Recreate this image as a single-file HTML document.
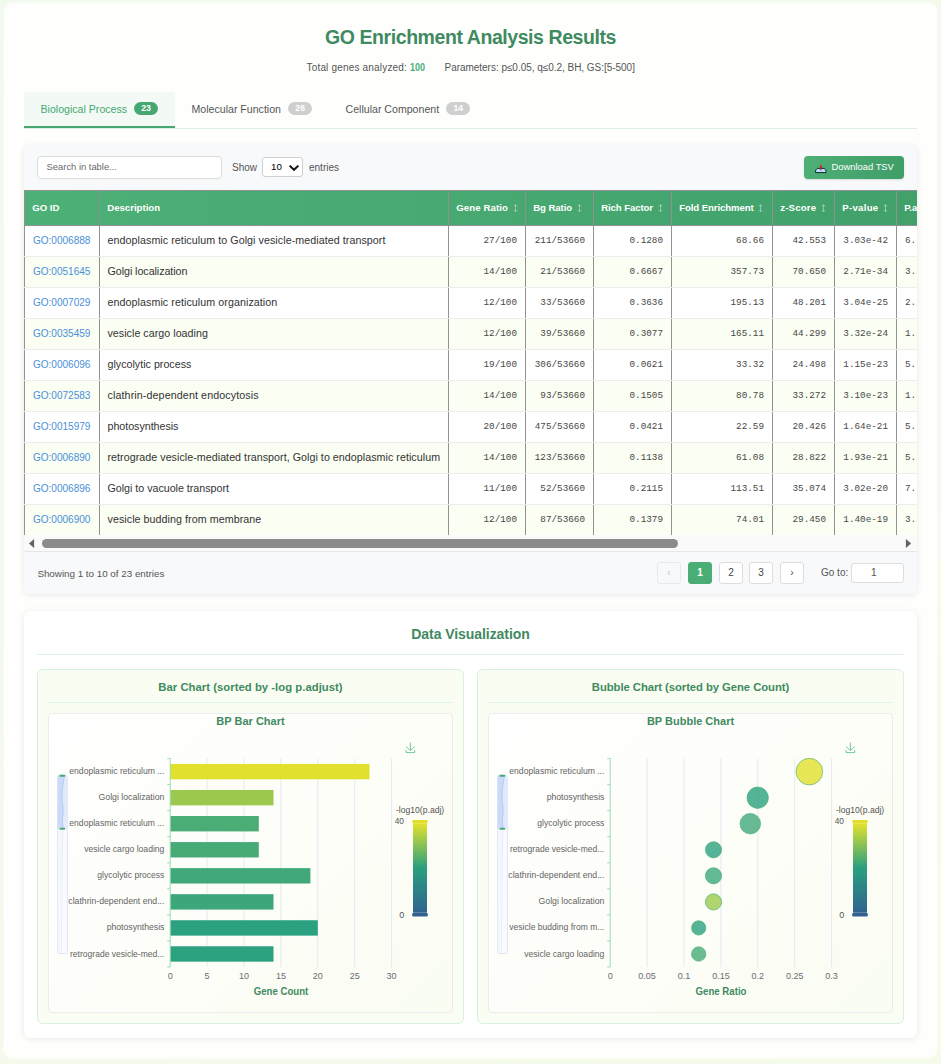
<!DOCTYPE html>
<html>
<head>
<meta charset="utf-8">
<title>GO Enrichment Analysis Results</title>
<style>
*{box-sizing:border-box;margin:0;padding:0}
html,body{width:941px;height:1064px;overflow:hidden}
body{font-family:"Liberation Sans",sans-serif;background:linear-gradient(135deg,#f2faef 0%,#f5fbea 100%);position:relative;color:#333}
.abs{position:absolute}
#wrap{left:4px;top:3px;width:933px;height:1055px;background:#fefffd;border-radius:9px;box-shadow:0 0 3px rgba(255,255,255,.8)}
#title{left:0;top:22px;width:941px;text-align:center;font-size:19.5px;letter-spacing:-.43px;font-weight:bold;color:#3f8a61;line-height:30px;white-space:nowrap}
#sub{left:0;top:59.8px;width:941px;height:16px;font-size:10px;color:#555;white-space:nowrap}
#sub span{position:absolute;top:0;line-height:16px}
#sub b{color:#4aae78}
/* tabs */
#tabline{left:24px;top:128px;width:893px;height:1px;background:#dcf1e6}
.tab{top:92px;height:36px;font-size:10.6px;line-height:34px;color:#555;white-space:nowrap}
.tab .bd{position:absolute;top:9.6px;height:13.6px;width:24px;border-radius:6.8px;background:#cfcfcf;color:#fff;font-size:8.7px;font-weight:bold;text-align:center;line-height:13.8px}
#tab1{left:24px;width:151px;background:#f3faf5;color:#45a870}
#tab1:after{content:"";position:absolute;left:0;top:34px;width:151px;height:2.4px;background:#45a870}
#tab1 .bd{background:#45a870}
/* table card */
#card1{left:24px;top:145px;width:893px;height:449px;background:#f8f9fa;border-radius:6px;box-shadow:0 1px 6px rgba(0,0,0,.09);overflow:hidden}
#search{left:13.4px;top:11.3px;width:184.2px;height:23px;border:1px solid #dcdcdc;border-radius:4px;background:#fff;font-size:9.4px;color:#6a6a6a;line-height:20.4px;padding-left:8.2px}
.tl{font-size:10px;color:#555;line-height:14px;white-space:nowrap}
#sel{left:238.4px;top:12.3px;width:40.2px;height:20px;border:1px solid #cfcfcf;border-radius:3px;background:#fff;font-size:9.8px;color:#000;line-height:18.4px;padding-left:7.6px}
#dl{left:780px;top:11px;width:100px;height:22.7px;border-radius:4px;background:linear-gradient(100deg,#4eb077,#3f9d67);color:#fff;font-size:9.4px;line-height:22.4px;white-space:nowrap;box-shadow:0 1px 2px rgba(0,0,0,.12)}
#tblwrap{left:0;top:45px;width:893px;height:345px;overflow:hidden;background:#fff}
table{border-collapse:collapse;table-layout:fixed;width:1000px;font-size:10.4px}
th{height:35px;padding-bottom:1.6px;color:#fff;font-weight:bold;font-size:9.6px;text-align:left;padding:0 0 1.6px 7.2px;border:1px solid #919191;white-space:nowrap;letter-spacing:.01px}
th .s{display:inline-block;vertical-align:-2.3px;margin-left:4.6px;width:5px;height:8.4px;opacity:.5}
tr.hd{background:linear-gradient(90deg,#4db077 0,#42a16b 893px)}
td{height:31px;padding:0 8px 1.4px 8px;border-left:1px solid #939393;border-right:1px solid #939393;border-bottom:1px solid #ececec;white-space:nowrap;overflow:hidden;color:#333}
tr:nth-child(odd) td{background:#fafef3}

td.id{color:#4a90d9;font-size:10.05px;padding-left:7.9px}
td.d{font-size:10.7px;padding-left:7.5px}
#sb{left:0;top:390px;width:893px;height:16px;background:#fafafa}
#foot{left:0;top:406px;width:893px;height:43px;background:#f8f9fa;border-top:1px solid #e6e7e9}
.pg{position:absolute;top:10px;width:24px;height:22px;border:1px solid #ddd;border-radius:3px;background:#fff;font-size:10px;color:#444;text-align:center;line-height:20px}
.pg.act{background:#49ad75;border-color:#49ad75;color:#fff;font-weight:bold}
.pg.dis{color:#c4c4c4;background:#f8f9fa;border-color:#e9e9e9}
#goto{left:827px;top:11px;width:53px;height:20px;border:1px solid #ddd;border-radius:3px;background:#fff;font-size:10px;color:#555;line-height:18px;padding-left:19px}
#card2{left:24px;top:610.6px;width:893px;height:427.2px;background:#fff;border-radius:7px;box-shadow:0 1px 7px rgba(0,0,0,.09)}
.h2{text-align:center;font-size:14px;letter-spacing:-.06px;font-weight:bold;color:#3f8a61;line-height:20px}
.panel{width:427px;height:355px;background:#fafef2;border:1px solid #d6f0e1;border-radius:6px}
.h3{left:0;top:9px;width:425px;text-align:center;font-size:11.3px;font-weight:bold;color:#3f8a61;line-height:16px}
.pl{left:10px;top:32px;width:405px;height:1px;background:#ddf2e8}
.cbox{left:10px;top:43px;width:405px;height:300px;border:1px solid #ebecee;border-radius:4px;background:linear-gradient(135deg,#fff 0%,#fdfef9 45%,#fafdf2 100%)}
td.n{font-family:"Liberation Mono",monospace;font-size:9.3px;text-align:right;color:#484848}
td.n.l{text-align:left;padding-right:0}
</style>
</head>
<body>
<div id="wrap" class="abs"></div>
<div id="title" class="abs">GO Enrichment Analysis Results</div>
<div id="sub" class="abs"><span style="left:306.5px;letter-spacing:.18px">Total genes analyzed:</span><span style="left:409.5px;transform:scaleX(.904);transform-origin:0 0"><b>100</b></span><span style="left:444.5px;letter-spacing:-.03px">Parameters: p≤0.05, q≤0.2, BH, GS:[5-500]</span></div>

<div id="tabline" class="abs"></div>
<div id="tab1" class="abs tab"><span class="abs" style="left:16.5px">Biological Process</span><span class="bd" style="left:110px">23</span></div>
<div class="abs tab" style="left:175px;width:152px"><span class="abs" style="left:16.5px">Molecular Function</span><span class="bd" style="left:113.2px">26</span></div>
<div class="abs tab" style="left:329px;width:158px"><span class="abs" style="left:16.5px">Cellular Component</span><span class="bd" style="left:117.3px">14</span></div>

<div id="card1" class="abs">
  <div id="search" class="abs">Search in table...</div>
  <div class="abs tl" style="left:208px;top:15.5px">Show</div>
  <div id="sel" class="abs">10<svg class="abs" style="left:24.8px;top:6.1px" width="12" height="8" viewBox="0 0 12 8"><path d="M1.6 1.6L6 5.8L10.4 1.6" stroke="#111" stroke-width="2" fill="none"/></svg></div>
  <div class="abs tl" style="left:285px;top:15.5px">entries</div>
  <div id="dl" class="abs"><svg class="abs" style="left:10px;top:7px" width="14" height="12" viewBox="0 0 14 12"><path d="M1.6 9.6V7.2L3.4 5.4H10.2L12 7.2V9.6Z" fill="#bcdffa" stroke="#16262a" stroke-width="1" stroke-linejoin="round"/><rect x="6" y="1.9" width="1.6" height="4.6" rx=".6" fill="#e2121c"/><path d="M5.5 6.4H8.1L6.8 7.9Z" fill="#3588e0"/></svg><span class="abs" style="left:27.5px">Download TSV</span></div>
  <div id="tblwrap" class="abs">
  <table>
  <colgroup><col style="width:75px"><col style="width:349px"><col style="width:77px"><col style="width:68px"><col style="width:78px"><col style="width:101px"><col style="width:62px"><col style="width:62px"><col style="width:128px"></colgroup>
  <tr class="hd"><th>GO ID</th><th>Description</th><th style="letter-spacing:0.11px">Gene Ratio<svg class="s" viewBox="0 0 5 9"><path d="M2.5 0.6V8.4M0.7 2.4L2.5 0.6L4.3 2.4M0.7 6.6L2.5 8.4L4.3 6.6" stroke="#fff" stroke-width="0.9" fill="none"/></svg></th><th style="letter-spacing:-0.07px">Bg Ratio<svg class="s" viewBox="0 0 5 9"><path d="M2.5 0.6V8.4M0.7 2.4L2.5 0.6L4.3 2.4M0.7 6.6L2.5 8.4L4.3 6.6" stroke="#fff" stroke-width="0.9" fill="none"/></svg></th><th style="letter-spacing:-0.09px">Rich Factor<svg class="s" viewBox="0 0 5 9"><path d="M2.5 0.6V8.4M0.7 2.4L2.5 0.6L4.3 2.4M0.7 6.6L2.5 8.4L4.3 6.6" stroke="#fff" stroke-width="0.9" fill="none"/></svg></th><th style="letter-spacing:-0.08px">Fold Enrichment<svg class="s" viewBox="0 0 5 9"><path d="M2.5 0.6V8.4M0.7 2.4L2.5 0.6L4.3 2.4M0.7 6.6L2.5 8.4L4.3 6.6" stroke="#fff" stroke-width="0.9" fill="none"/></svg></th><th style="letter-spacing:0.21px">z-Score<svg class="s" viewBox="0 0 5 9"><path d="M2.5 0.6V8.4M0.7 2.4L2.5 0.6L4.3 2.4M0.7 6.6L2.5 8.4L4.3 6.6" stroke="#fff" stroke-width="0.9" fill="none"/></svg></th><th style="letter-spacing:0.31px">P-value<svg class="s" viewBox="0 0 5 9"><path d="M2.5 0.6V8.4M0.7 2.4L2.5 0.6L4.3 2.4M0.7 6.6L2.5 8.4L4.3 6.6" stroke="#fff" stroke-width="0.9" fill="none"/></svg></th><th>P.adjust</th></tr>
  <tr><td class="id">GO:0006888</td><td class="d" style="letter-spacing:0.063px">endoplasmic reticulum to Golgi vesicle-mediated transport</td><td class="n">27/100</td><td class="n">211/53660</td><td class="n">0.1280</td><td class="n">68.66</td><td class="n">42.553</td><td class="n">3.03e-42</td><td class="n l">6.</td></tr>
  <tr><td class="id">GO:0051645</td><td class="d" style="letter-spacing:-0.050px">Golgi localization</td><td class="n">14/100</td><td class="n">21/53660</td><td class="n">0.6667</td><td class="n">357.73</td><td class="n">70.650</td><td class="n">2.71e-34</td><td class="n l">3.</td></tr>
  <tr><td class="id">GO:0007029</td><td class="d" style="letter-spacing:0.068px">endoplasmic reticulum organization</td><td class="n">12/100</td><td class="n">33/53660</td><td class="n">0.3636</td><td class="n">195.13</td><td class="n">48.201</td><td class="n">3.04e-25</td><td class="n l">2.</td></tr>
  <tr><td class="id">GO:0035459</td><td class="d" style="letter-spacing:0.029px">vesicle cargo loading</td><td class="n">12/100</td><td class="n">39/53660</td><td class="n">0.3077</td><td class="n">165.11</td><td class="n">44.299</td><td class="n">3.32e-24</td><td class="n l">1.</td></tr>
  <tr><td class="id">GO:0006096</td><td class="d" style="letter-spacing:0.006px">glycolytic process</td><td class="n">19/100</td><td class="n">306/53660</td><td class="n">0.0621</td><td class="n">33.32</td><td class="n">24.498</td><td class="n">1.15e-23</td><td class="n l">5.</td></tr>
  <tr><td class="id">GO:0072583</td><td class="d" style="letter-spacing:0.110px">clathrin-dependent endocytosis</td><td class="n">14/100</td><td class="n">93/53660</td><td class="n">0.1505</td><td class="n">80.78</td><td class="n">33.272</td><td class="n">3.10e-23</td><td class="n l">1.</td></tr>
  <tr><td class="id">GO:0015979</td><td class="d" style="letter-spacing:-0.029px">photosynthesis</td><td class="n">20/100</td><td class="n">475/53660</td><td class="n">0.0421</td><td class="n">22.59</td><td class="n">20.426</td><td class="n">1.64e-21</td><td class="n l">5.</td></tr>
  <tr><td class="id">GO:0006890</td><td class="d" style="letter-spacing:0.042px">retrograde vesicle-mediated transport, Golgi to endoplasmic reticulum</td><td class="n">14/100</td><td class="n">123/53660</td><td class="n">0.1138</td><td class="n">61.08</td><td class="n">28.822</td><td class="n">1.93e-21</td><td class="n l">5.</td></tr>
  <tr><td class="id">GO:0006896</td><td class="d" style="letter-spacing:-0.015px">Golgi to vacuole transport</td><td class="n">11/100</td><td class="n">52/53660</td><td class="n">0.2115</td><td class="n">113.51</td><td class="n">35.074</td><td class="n">3.02e-20</td><td class="n l">7.</td></tr>
  <tr><td class="id">GO:0006900</td><td class="d" style="letter-spacing:0.059px">vesicle budding from membrane</td><td class="n">12/100</td><td class="n">87/53660</td><td class="n">0.1379</td><td class="n">74.01</td><td class="n">29.450</td><td class="n">1.40e-19</td><td class="n l">3.</td></tr>
  </table>
  </div>
  <!-- horizontal scrollbar -->
  <div id="sb" class="abs">
    <svg class="abs" style="left:4px;top:3px" width="8" height="11" viewBox="0 0 8 11"><path d="M6.1 0.9 L0.9 5.5 L6.1 10.1 Z" fill="#636363"/></svg>
    <div class="abs" style="left:17.9px;top:4px;width:636px;height:9px;border-radius:4.5px;background:#8b8b8b"></div>
    <svg class="abs" style="left:880px;top:3px" width="8" height="11" viewBox="0 0 8 11"><path d="M1.9 0.9 L7.1 5.5 L1.9 10.1 Z" fill="#636363"/></svg>
  </div>
  <div id="foot" class="abs">
    <span class="abs tl" style="left:13.4px;top:14.6px;font-size:9.8px">Showing 1 to 10 of 23 entries</span>
    <div class="pg dis" style="left:633px">‹</div>
    <div class="pg act" style="left:664px">1</div>
    <div class="pg" style="left:695px">2</div>
    <div class="pg" style="left:725px">3</div>
    <div class="pg" style="left:756px">›</div>
    <span class="abs tl" style="left:797px;top:14px">Go to:</span>
    <div class="abs" id="goto">1</div>
  </div>
</div>

<!-- Data visualization -->
<div id="card2" class="abs">
  <div class="abs h2" style="left:0;top:13.1px;width:893px">Data Visualization</div>
  <div class="abs" style="left:13px;top:43.4px;width:867px;height:1px;background:#ddf2e8"></div>
</div>
<div class="abs panel" style="left:37px;top:669px">
  <div class="abs h3" style="letter-spacing:.03px">Bar Chart (sorted by -log p.adjust)</div>
  <div class="abs pl"></div>
  <div class="abs cbox"></div>
</div>
<div class="abs panel" style="left:477px;top:669px">
  <div class="abs h3" style="letter-spacing:-.065px">Bubble Chart (sorted by Gene Count)</div>
  <div class="abs pl"></div>
  <div class="abs cbox"></div>
</div>
<!--BAR-->
<svg class="abs" id="charts" style="left:0;top:0" width="941" height="1064" viewBox="0 0 941 1064" font-family="Liberation Sans, sans-serif">
<defs><linearGradient id="vg" x1="0" y1="0" x2="0" y2="1"><stop offset="0" stop-color="#e2e22c"/><stop offset="0.5" stop-color="#2a9f7f"/><stop offset="1" stop-color="#31648f"/></linearGradient></defs>
<text x="250.5" y="725" text-anchor="middle" font-size="11" font-weight="bold" fill="#3f8a61">BP Bar Chart</text>
<path d="M207.1 758.6V967.0M244.0 758.6V967.0M280.9 758.6V967.0M317.8 758.6V967.0M354.7 758.6V967.0M391.6 758.6V967.0" stroke="#e4e9f3" stroke-width="1" fill="none"/>
<rect x="170.2" y="763.92" width="199.3" height="15.4" fill="#e1e12d"/>
<rect x="170.2" y="789.98" width="103.3" height="15.4" fill="#9bc94e"/>
<rect x="170.2" y="816.02" width="88.6" height="15.4" fill="#4aad76"/>
<rect x="170.2" y="842.07" width="88.6" height="15.4" fill="#46ab77"/>
<rect x="170.2" y="868.12" width="140.2" height="15.4" fill="#41a979"/>
<rect x="170.2" y="894.17" width="103.3" height="15.4" fill="#3ca77a"/>
<rect x="170.2" y="920.23" width="147.6" height="15.4" fill="#2ba17f"/>
<rect x="170.2" y="946.27" width="103.3" height="15.4" fill="#2ba17f"/>
<path d="M170.2 758.6V967.0M170.2 758.60H167.2M170.2 784.65H167.2M170.2 810.70H167.2M170.2 836.75H167.2M170.2 862.80H167.2M170.2 888.85H167.2M170.2 914.90H167.2M170.2 940.95H167.2M170.2 967.00H167.2" stroke="#9fdab9" stroke-width="1" fill="none"/>
<text x="164.4" y="774.1" text-anchor="end" font-size="9.3" fill="#636363" textLength="95.1" lengthAdjust="spacingAndGlyphs">endoplasmic reticulum ...</text>
<text x="164.4" y="800.2" text-anchor="end" font-size="9.3" fill="#636363" textLength="65.9" lengthAdjust="spacingAndGlyphs">Golgi localization</text>
<text x="164.4" y="826.2" text-anchor="end" font-size="9.3" fill="#636363" textLength="95.1" lengthAdjust="spacingAndGlyphs">endoplasmic reticulum ...</text>
<text x="164.4" y="852.3" text-anchor="end" font-size="9.3" fill="#636363" textLength="80.2" lengthAdjust="spacingAndGlyphs">vesicle cargo loading</text>
<text x="164.4" y="878.3" text-anchor="end" font-size="9.3" fill="#636363" textLength="67.1" lengthAdjust="spacingAndGlyphs">glycolytic process</text>
<text x="164.4" y="904.4" text-anchor="end" font-size="9.3" fill="#636363" textLength="96.1" lengthAdjust="spacingAndGlyphs">clathrin-dependent end...</text>
<text x="164.4" y="930.4" text-anchor="end" font-size="9.3" fill="#636363" textLength="57.7" lengthAdjust="spacingAndGlyphs">photosynthesis</text>
<text x="164.4" y="956.5" text-anchor="end" font-size="9.3" fill="#636363" textLength="94.4" lengthAdjust="spacingAndGlyphs">retrograde vesicle-med...</text>
<text x="170.2" y="979.2" text-anchor="middle" font-size="9" fill="#6a6c74">0</text>
<text x="207.1" y="979.2" text-anchor="middle" font-size="9" fill="#6a6c74">5</text>
<text x="244.0" y="979.2" text-anchor="middle" font-size="9" fill="#6a6c74">10</text>
<text x="280.9" y="979.2" text-anchor="middle" font-size="9" fill="#6a6c74">15</text>
<text x="317.8" y="979.2" text-anchor="middle" font-size="9" fill="#6a6c74">20</text>
<text x="354.7" y="979.2" text-anchor="middle" font-size="9" fill="#6a6c74">25</text>
<text x="391.6" y="979.2" text-anchor="middle" font-size="9" fill="#6a6c74">30</text>
<text x="281.0" y="994.8" text-anchor="middle" font-size="10.5" font-weight="bold" fill="#3f8a61" textLength="54.4" lengthAdjust="spacingAndGlyphs">Gene Count</text>
<g transform="translate(0 0)">
<rect x="57.6" y="775" width="9.8" height="178.5" rx="1.5" fill="#fafbfe" stroke="#dbe2f2" stroke-width="0.9"/>
<path d="M63 828.4C62.4 840 62.2 860 62 890S61.6 935 61.5 953L57.9 953L57.9 828.4Z" fill="#f4f7fd"/>
<rect x="57.6" y="775.2" width="9.8" height="53.4" fill="#e2eafc"/>
<path d="M64.6 775.4C63 783 62.2 789 62.1 796S63.4 806 63.2 811S62.2 819 62.4 822S63.1 826 63 828.4L57.6 828.4L57.6 775.4Z" fill="#ccdaf9"/>
<path d="M64.6 775.4C63 783 62.2 789 62.1 796S63.4 806 63.2 811S62.2 819 62.4 822S63.1 826 63 828.4" stroke="#a8c0f4" stroke-width="0.7" fill="none"/>
<path d="M63 828.4C62.4 840 62.2 860 62 890S61.6 935 61.5 953" stroke="#dde5f8" stroke-width="0.6" fill="none"/>
<rect x="59.5" y="774.8" width="5.7" height="2" rx=".7" fill="#4aab72"/><rect x="59.5" y="827.8" width="5.7" height="2" rx=".7" fill="#4aab72"/>
</g>
<text x="396.0" y="813.2" font-size="9" fill="#555" textLength="48.2" lengthAdjust="spacingAndGlyphs">-log10(p.adj)</text>
<text x="394.7" y="824.1" font-size="9" fill="#555" textLength="9.3" lengthAdjust="spacingAndGlyphs">40</text>
<text x="399.2" y="917.8" font-size="9" fill="#555">0</text>
<rect x="413.0" y="823.3" width="14" height="89.4" fill="url(#vg)"/>
<rect x="412.0" y="820" width="16" height="3.2" rx="1.6" fill="#e0e028"/>
<rect x="412.0" y="912.8" width="16" height="3.8" rx="1.9" fill="#30618f"/>
<g transform="translate(0 0)" stroke="#66c295" stroke-width="0.9" fill="none"><path d="M406 746.6L410.4 750.5L414.9 746.7M406.1 750V752.6H414.6V750M410.4 750.4V742.6"/></g>
<text x="690.5" y="725" text-anchor="middle" font-size="11" font-weight="bold" fill="#3f8a61">BP Bubble Chart</text>
<path d="M647.1 758.6V967.0M684.0 758.6V967.0M720.9 758.6V967.0M757.8 758.6V967.0M794.7 758.6V967.0M831.6 758.6V967.0" stroke="#e4e9f3" stroke-width="1" fill="none"/>
<circle cx="809.4" cy="771.6" r="13.3" fill="#e1e12d" fill-opacity="0.8" stroke="#4cae75" stroke-opacity="0.8" stroke-width="0.8"/>
<circle cx="757.7" cy="797.7" r="10.7" fill="#2ba17f" fill-opacity="0.8" stroke="#4cae75" stroke-opacity="0.8" stroke-width="0.8"/>
<circle cx="750.3" cy="823.7" r="10.3" fill="#41a979" fill-opacity="0.8" stroke="#4cae75" stroke-opacity="0.8" stroke-width="0.8"/>
<circle cx="713.5" cy="849.8" r="8.1" fill="#2ba17f" fill-opacity="0.8" stroke="#4cae75" stroke-opacity="0.8" stroke-width="0.8"/>
<circle cx="713.5" cy="875.8" r="8.1" fill="#3ca77a" fill-opacity="0.8" stroke="#4cae75" stroke-opacity="0.8" stroke-width="0.8"/>
<circle cx="713.5" cy="901.9" r="8.1" fill="#9bc94e" fill-opacity="0.8" stroke="#4cae75" stroke-opacity="0.8" stroke-width="0.8"/>
<circle cx="698.7" cy="927.9" r="7.2" fill="#2ba17f" fill-opacity="0.8" stroke="#4cae75" stroke-opacity="0.8" stroke-width="0.8"/>
<circle cx="698.7" cy="954.0" r="7.2" fill="#46ab77" fill-opacity="0.8" stroke="#4cae75" stroke-opacity="0.8" stroke-width="0.8"/>
<path d="M610.2 758.6V967.0M610.2 758.60H607.2M610.2 784.65H607.2M610.2 810.70H607.2M610.2 836.75H607.2M610.2 862.80H607.2M610.2 888.85H607.2M610.2 914.90H607.2M610.2 940.95H607.2M610.2 967.00H607.2" stroke="#9fdab9" stroke-width="1" fill="none"/>
<text x="604.4" y="774.1" text-anchor="end" font-size="9.3" fill="#636363" textLength="95.1" lengthAdjust="spacingAndGlyphs">endoplasmic reticulum ...</text>
<text x="604.4" y="800.2" text-anchor="end" font-size="9.3" fill="#636363" textLength="57.7" lengthAdjust="spacingAndGlyphs">photosynthesis</text>
<text x="604.4" y="826.2" text-anchor="end" font-size="9.3" fill="#636363" textLength="67.1" lengthAdjust="spacingAndGlyphs">glycolytic process</text>
<text x="604.4" y="852.3" text-anchor="end" font-size="9.3" fill="#636363" textLength="94.4" lengthAdjust="spacingAndGlyphs">retrograde vesicle-med...</text>
<text x="604.4" y="878.3" text-anchor="end" font-size="9.3" fill="#636363" textLength="96.1" lengthAdjust="spacingAndGlyphs">clathrin-dependent end...</text>
<text x="604.4" y="904.4" text-anchor="end" font-size="9.3" fill="#636363" textLength="65.9" lengthAdjust="spacingAndGlyphs">Golgi localization</text>
<text x="604.4" y="930.4" text-anchor="end" font-size="9.3" fill="#636363" textLength="95.1" lengthAdjust="spacingAndGlyphs">vesicle budding from m...</text>
<text x="604.4" y="956.5" text-anchor="end" font-size="9.3" fill="#636363" textLength="80.2" lengthAdjust="spacingAndGlyphs">vesicle cargo loading</text>
<text x="610.2" y="979.2" text-anchor="middle" font-size="9" fill="#6a6c74">0</text>
<text x="647.1" y="979.2" text-anchor="middle" font-size="9" fill="#6a6c74">0.05</text>
<text x="684.0" y="979.2" text-anchor="middle" font-size="9" fill="#6a6c74">0.1</text>
<text x="720.9" y="979.2" text-anchor="middle" font-size="9" fill="#6a6c74">0.15</text>
<text x="757.8" y="979.2" text-anchor="middle" font-size="9" fill="#6a6c74">0.2</text>
<text x="794.7" y="979.2" text-anchor="middle" font-size="9" fill="#6a6c74">0.25</text>
<text x="831.6" y="979.2" text-anchor="middle" font-size="9" fill="#6a6c74">0.3</text>
<text x="721.0" y="994.8" text-anchor="middle" font-size="10.5" font-weight="bold" fill="#3f8a61" textLength="51.0" lengthAdjust="spacingAndGlyphs">Gene Ratio</text>
<g transform="translate(440 0)">
<rect x="57.6" y="775" width="9.8" height="178.5" rx="1.5" fill="#fafbfe" stroke="#dbe2f2" stroke-width="0.9"/>
<path d="M63 828.4C62.4 840 62.2 860 62 890S61.6 935 61.5 953L57.9 953L57.9 828.4Z" fill="#f4f7fd"/>
<rect x="57.6" y="775.2" width="9.8" height="53.4" fill="#e2eafc"/>
<path d="M64.6 775.4C63 783 62.2 789 62.1 796S63.4 806 63.2 811S62.2 819 62.4 822S63.1 826 63 828.4L57.6 828.4L57.6 775.4Z" fill="#ccdaf9"/>
<path d="M64.6 775.4C63 783 62.2 789 62.1 796S63.4 806 63.2 811S62.2 819 62.4 822S63.1 826 63 828.4" stroke="#a8c0f4" stroke-width="0.7" fill="none"/>
<path d="M63 828.4C62.4 840 62.2 860 62 890S61.6 935 61.5 953" stroke="#dde5f8" stroke-width="0.6" fill="none"/>
<rect x="59.5" y="774.8" width="5.7" height="2" rx=".7" fill="#4aab72"/><rect x="59.5" y="827.8" width="5.7" height="2" rx=".7" fill="#4aab72"/>
</g>
<text x="836.0" y="813.2" font-size="9" fill="#555" textLength="48.2" lengthAdjust="spacingAndGlyphs">-log10(p.adj)</text>
<text x="834.7" y="824.1" font-size="9" fill="#555" textLength="9.3" lengthAdjust="spacingAndGlyphs">40</text>
<text x="839.2" y="917.8" font-size="9" fill="#555">0</text>
<rect x="853.0" y="823.3" width="14" height="89.4" fill="url(#vg)"/>
<rect x="852.0" y="820" width="16" height="3.2" rx="1.6" fill="#e0e028"/>
<rect x="852.0" y="912.8" width="16" height="3.8" rx="1.9" fill="#30618f"/>
<g transform="translate(440 0)" stroke="#66c295" stroke-width="0.9" fill="none"><path d="M406 746.6L410.4 750.5L414.9 746.7M406.1 750V752.6H414.6V750M410.4 750.4V742.6"/></g>
</svg>
<!--/BAR-->
</body>
</html>
